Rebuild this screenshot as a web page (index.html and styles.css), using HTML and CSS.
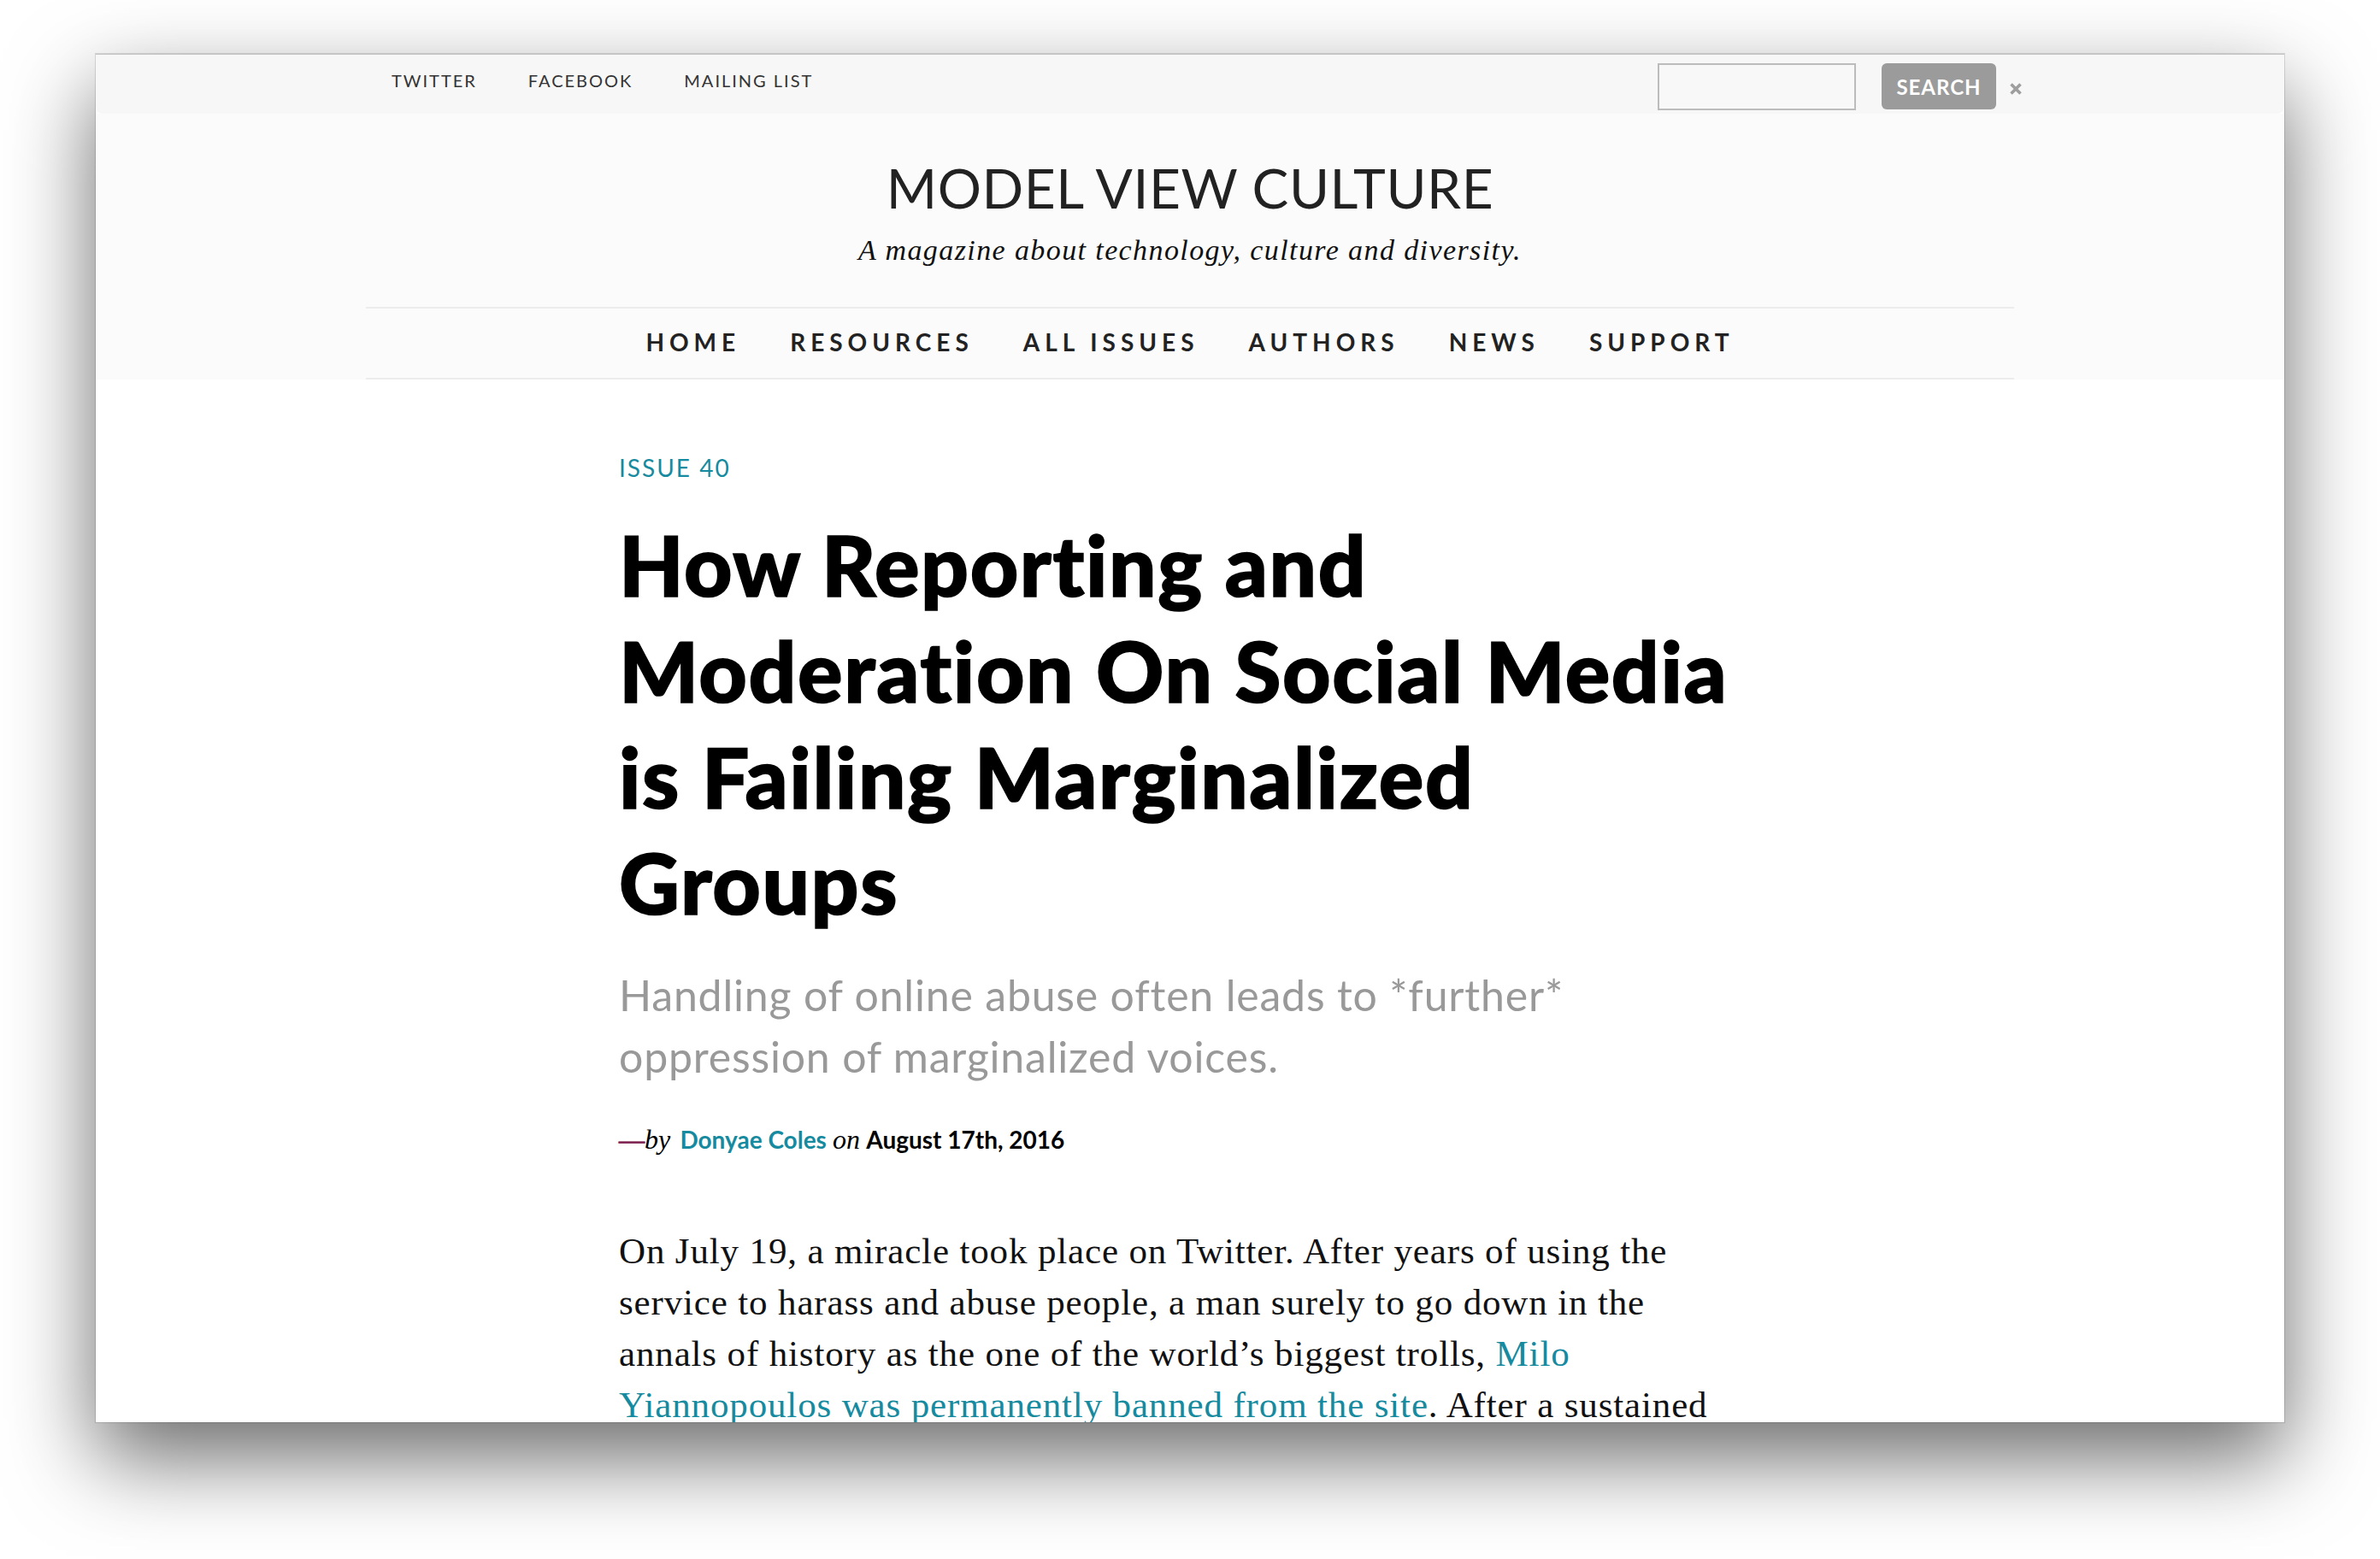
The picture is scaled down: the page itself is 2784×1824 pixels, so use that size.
FILE: index.html
```html
<!DOCTYPE html>
<html lang="en">
<head>
<meta charset="utf-8">
<title>How Reporting and Moderation On Social Media is Failing Marginalized Groups — Model View Culture</title>
<link rel="stylesheet" href="styles.css">
</head>
<body>
<div class="window">
  <div class="topbar">
    <nav class="social">
      <a class="social-link" href="#">TWITTER</a>
      <a class="social-link" href="#">FACEBOOK</a>
      <a class="social-link" href="#">MAILING LIST</a>
    </nav>
    <form class="search">
      <input class="search-input" type="text" aria-label="Search">
      <button class="search-btn" type="button">SEARCH</button>
      <svg class="search-close" width="16" height="16" viewBox="0 0 16 16" aria-label="Close"><path d="M2.5 2.5 L13.5 13.5 M13.5 2.5 L2.5 13.5" stroke="#9e9e9e" stroke-width="3.6" stroke-linecap="butt" fill="none"/></svg>
    </form>
  </div>
  <header class="masthead">
    <h1 class="site-title">MODEL VIEW CULTURE</h1>
    <p class="tagline">A magazine about technology, culture and diversity.</p>
    <nav class="mainnav">
      <a class="mainnav-link" href="#">HOME</a>
      <a class="mainnav-link" href="#">RESOURCES</a>
      <a class="mainnav-link" href="#">ALL ISSUES</a>
      <a class="mainnav-link" href="#">AUTHORS</a>
      <a class="mainnav-link" href="#">NEWS</a>
      <a class="mainnav-link" href="#">SUPPORT</a>
    </nav>
  </header>
  <main class="article">
    <a class="issue" href="#">ISSUE 40</a>
    <h2 class="headline">How Reporting and Moderation On Social Media is Failing Marginalized Groups</h2>
    <p class="dek">Handling of online abuse often leads to *further* oppression of marginalized voices.</p>
    <p class="byline"><span class="dash">&#8212;</span><em class="byline-em">by</em> <a class="author" href="#">Donyae Coles</a> <em class="byline-em">on</em> <strong class="date">August 17th, 2016</strong></p>
    <p class="body-text">On July 19, a miracle took place on Twitter. After years of using the service to harass and abuse people, a man surely to go down in the annals of history as the one of the world&#8217;s biggest trolls, <a class="text-link" href="#">Milo Yiannopoulos was permanently banned from the site</a>. After a sustained</p>
  </main>
</div>
</body>
</html>
```

FILE: styles.css
```css
html, body {
  margin: 0;
  padding: 0;
}

body {
  background: #ffffff;
  height: 1824px;
  box-sizing: border-box;
  padding: 63px 0 0 112px;
  font-family: Lato, "Liberation Sans", sans-serif;
  color: #222;
}

.window {
  width: 2560px;
  height: 1601px;
  box-sizing: border-box;
  overflow: hidden;
  background: #ffffff;
  border-top: 1px solid #c4c4c4;
  box-shadow: 0 42px 95px rgba(0, 0, 0, 0.58), 0 0 0 1px rgba(0, 0, 0, 0.12);
  display: flex;
  flex-direction: column;
}

/* ---------- top bar ---------- */
.topbar {
  height: 69px;
  flex: none;
  display: flex;
  align-items: flex-start;
  background: #f7f7f7;
  border-radius: 0 0 8px 8px;
  padding: 0 306px 0 346px;
}

.social {
  display: flex;
  gap: 60px;
  margin-top: 20px;
}

.social-link {
  font-family: Lato, sans-serif;
  font-size: 20px;
  line-height: 20px;
  letter-spacing: 2px;
  color: #333;
  text-decoration: none;
}

.search {
  margin-left: auto;
  margin-top: 10px;
  display: flex;
  align-items: flex-start;
}

.search-input {
  width: 232px;
  height: 55px;
  box-sizing: border-box;
  border: 2px solid #bcbcbc;
  background: #f8f8f8;
  margin: 0;
  padding: 0;
}

.search-btn {
  margin: 0 0 0 30px;
  width: 134px;
  height: 54px;
  border: 0;
  border-radius: 6px;
  background: #9b9b9b;
  color: #fff;
  font-family: Lato, sans-serif;
  font-weight: 700;
  font-size: 24px;
  letter-spacing: 1px;
  padding: 0;
}

.search-close {
  margin: 22px 0 0 15px;
  flex: none;
}

/* ---------- masthead ---------- */
.masthead {
  flex: none;
  background: #fbfbfb;
  padding-top: 49px;
  display: flex;
  flex-direction: column;
  align-items: center;
}

.site-title {
  margin: 0;
  font-family: Lato, sans-serif;
  font-weight: 400;
  font-size: 64px;
  line-height: 1.2;
  letter-spacing: 0.6px;
  color: #222;
}

.tagline {
  margin: 15px 0 0;
  font-family: "Liberation Serif", serif;
  font-style: italic;
  font-size: 34px;
  line-height: normal;
  letter-spacing: 1.4px;
  color: #111;
}

.mainnav {
  margin-top: 47px;
  width: 1928px;
  border-top: 2px solid #ececec;
  border-bottom: 2px solid #ececec;
  padding: 25px 0 28px;
  display: flex;
  justify-content: center;
  gap: 58px;
}

.mainnav-link {
  font-family: Lato, sans-serif;
  font-weight: 700;
  font-size: 28px;
  line-height: 28px;
  letter-spacing: 6px;
  color: #222;
  text-decoration: none;
}

/* ---------- article ---------- */
.article {
  width: 1336px;
  margin: 87px auto 0;
  display: flex;
  flex-direction: column;
  align-items: flex-start;
}

.issue {
  font-family: Lato, sans-serif;
  font-size: 28px;
  line-height: 1.2;
  letter-spacing: 2px;
  color: #168a9e;
  text-decoration: none;
}

.headline {
  margin: 34px 0 0;
  max-width: 1320px;
  font-family: Lato, sans-serif;
  font-weight: 900;
  font-size: 98px;
  line-height: 124px;
  letter-spacing: 1.6px;
  -webkit-text-stroke: 1.6px #000;
  color: #000;
}

.dek {
  margin: 34px 0 0;
  width: 1260px;
  font-family: Lato, sans-serif;
  font-size: 50px;
  line-height: 72px;
  letter-spacing: 0.8px;
  color: #999;
}

.byline {
  margin: 41px 0 0;
  font-family: Lato, sans-serif;
  font-size: 28px;
  line-height: 40px;
  color: #000;
}

.dash {
  font-family: "Liberation Serif", serif;
  font-size: 30px;
  color: #7e1b4e;
  -webkit-text-stroke: 0.9px #7e1b4e;
}

.byline-em {
  font-family: "Liberation Serif", serif;
  font-size: 32px;
  font-style: italic;
}

.author {
  font-weight: 700;
  color: #168a9e;
  text-decoration: none;
  margin-left: 4px;
}

.date {
  font-weight: 700;
}

.body-text {
  margin: 80px 0 0;
  max-width: 1312px;
  font-family: "Liberation Serif", serif;
  font-size: 43px;
  line-height: 60px;
  letter-spacing: 0.85px;
  color: #111;
}

.text-link {
  color: #168a9e;
  text-decoration: none;
}
```
